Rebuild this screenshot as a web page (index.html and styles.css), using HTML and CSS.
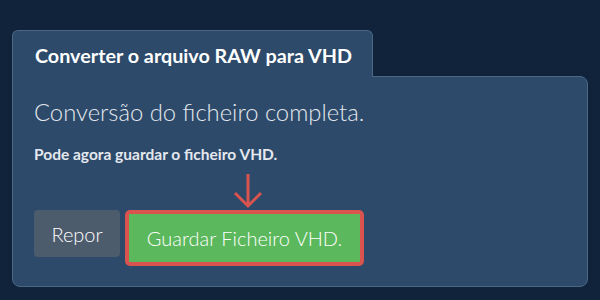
FILE: index.html
```html
<!DOCTYPE html>
<html lang="pt">
<head>
    <meta charset="UTF-8">
    <title>Converter RAW para VHD</title>
    <link rel="stylesheet" href="styles.css">
</head>
<body>
    <div class="wrap">
        <div class="tab">Converter o arquivo RAW para VHD</div>
        <div class="panel">
            <h2 class="title">Conversão do ficheiro completa.</h2>
            <p class="hint">Pode agora guardar o ficheiro VHD.</p>
            <div class="actions">
                <button class="btn btn-reset">Repor</button>
                <div class="highlight">
                    <svg class="arrow" width="30" height="36" viewBox="0 0 30 36">
                        <path d="M15 1 V33 M2 20 L15 33 L28 20" fill="none" stroke="#d9534f" stroke-width="3"/>
                    </svg>
                    <button class="btn btn-save">Guardar Ficheiro VHD.</button>
                </div>
            </div>
        </div>
    </div>
</body>
</html>
```

FILE: styles.css
```css
body {
    margin: 0;
    background: #11233a;
    font-family: Lato, "Open Sans", sans-serif;
    color: #fff;
}
.wrap {
    padding: 30px 12px 0 12px;
    width: 576px;
}
.tab {
    display: inline-block;
    position: relative;
    z-index: 1;
    box-sizing: border-box;
    width: 361px;
    height: 47px;
    margin-bottom: -1px;
    padding: 0 0 0 22px;
    white-space: nowrap;
    line-height: 50px;
    font-size: 19.75px;
    font-weight: bold;
    background: #2d4a6a;
    border: 1px solid #4a6786;
    border-bottom: none;
    border-radius: 6px 6px 0 0;
}
.panel {
    box-sizing: border-box;
    height: 211px;
    padding: 0 21px;
    background: #2d4a6a;
    border: 1px solid #4a6786;
    border-radius: 0 8px 8px 8px;
}
.title {
    margin: 21px 0 0 0;
    font-size: 23.8px;
    font-weight: 300;
    color: #e4e8ee;
}
.hint {
    margin: 19px 0 0 0;
    font-size: 15.5px;
    font-weight: bold;
    color: #e4e8ee;
}
.actions {
    display: flex;
    align-items: flex-start;
    gap: 5px;
    margin-top: 47px;
}
.btn {
    font-family: Lato, "Open Sans", sans-serif;
    font-size: 20px;
    font-weight: 300;
    color: #fff;
    border: none;
    border-radius: 4px;
}
.btn-reset {
    width: 86px;
    height: 47px;
    background: #4d5c6c;
}
.highlight {
    position: relative;
    border: 4px solid #d9534f;
    border-radius: 5px;
    display: flex;
}
.btn-save {
    width: 231px;
    height: 48px;
    background: #5cb85c;
    border-radius: 0;
}
.arrow {
    position: absolute;
    left: 104px;
    top: -41px;
}
```
